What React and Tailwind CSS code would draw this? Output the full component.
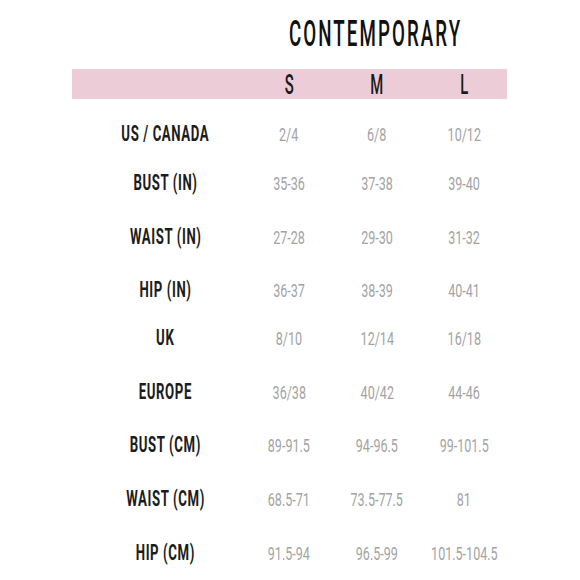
import React from "react";

const rows = [
  { label: "US / CANADA", s: "2/4", m: "6/8", l: "10/12", mt: "mt-[11px]" },
  { label: "BUST (IN)", s: "35-36", m: "37-38", l: "39-40", mt: "mt-[1px]" },
  { label: "WAIST (IN)", s: "27-28", m: "29-30", l: "31-32", mt: "mt-[6px]" },
  { label: "HIP (IN)", s: "36-37", m: "38-39", l: "40-41", mt: "mt-[5px]" },
  { label: "UK", s: "8/10", m: "12/14", l: "16/18", mt: "mt-0" },
  { label: "EUROPE", s: "36/38", m: "40/42", l: "44-46", mt: "mt-[6px]" },
  { label: "BUST (CM)", s: "89-91.5", m: "94-96.5", l: "99-101.5", mt: "mt-[5px]" },
  { label: "WAIST (CM)", s: "68.5-71", m: "73.5-77.5", l: "81", mt: "mt-[6px]" },
  { label: "HIP (CM)", s: "91.5-94", m: "96.5-99", l: "101.5-104.5", mt: "mt-[6px]" },
];

const font = "font-['Roboto','Liberation_Sans',sans-serif]";

function Value({ children }) {
  return (
    <div className="flex justify-center whitespace-nowrap">
      <span className="inline-block scale-x-[0.66] text-[19px] font-normal leading-none text-[#a3a3a3]">
        {children}
      </span>
    </div>
  );
}

export default function App() {
  return (
    <div className={`w-[580px] h-[580px] bg-white ${font}`}>
      <div className="ml-[72px] w-[435px]">
        <div className="grid grid-cols-[173px_88px_88px_86px] h-[69px]">
          <div />
          <div className="col-span-3 flex items-center justify-center pb-[1px]">
            <span className="inline-block scale-x-[0.52] text-[36px] font-medium leading-none tracking-[4px] text-[#111]">
              CONTEMPORARY
            </span>
          </div>
        </div>
        <div className="grid grid-cols-[173px_88px_88px_86px] h-[30px] bg-[#ecccd6] items-center pt-[3px]">
          <div />
          {["S", "M", "L"].map((s) => (
            <div key={s} className="flex justify-center">
              <span className="inline-block scale-x-[0.55] text-[27px] font-medium leading-none text-[#1a1a1a]">
                {s}
              </span>
            </div>
          ))}
        </div>
        {rows.map((r) => (
          <div
            key={r.label}
            className={`grid grid-cols-[173px_88px_88px_86px] h-[48px] items-center ${r.mt}`}
          >
            <div className="flex justify-center pl-[14px] whitespace-nowrap">
              <span className="inline-block scale-x-[0.6] text-[22px] font-bold leading-none tracking-[1px] text-[#1c1c1c]">
                {r.label}
              </span>
            </div>
            <Value>{r.s}</Value>
            <Value>{r.m}</Value>
            <Value>{r.l}</Value>
          </div>
        ))}
      </div>
    </div>
  );
}
